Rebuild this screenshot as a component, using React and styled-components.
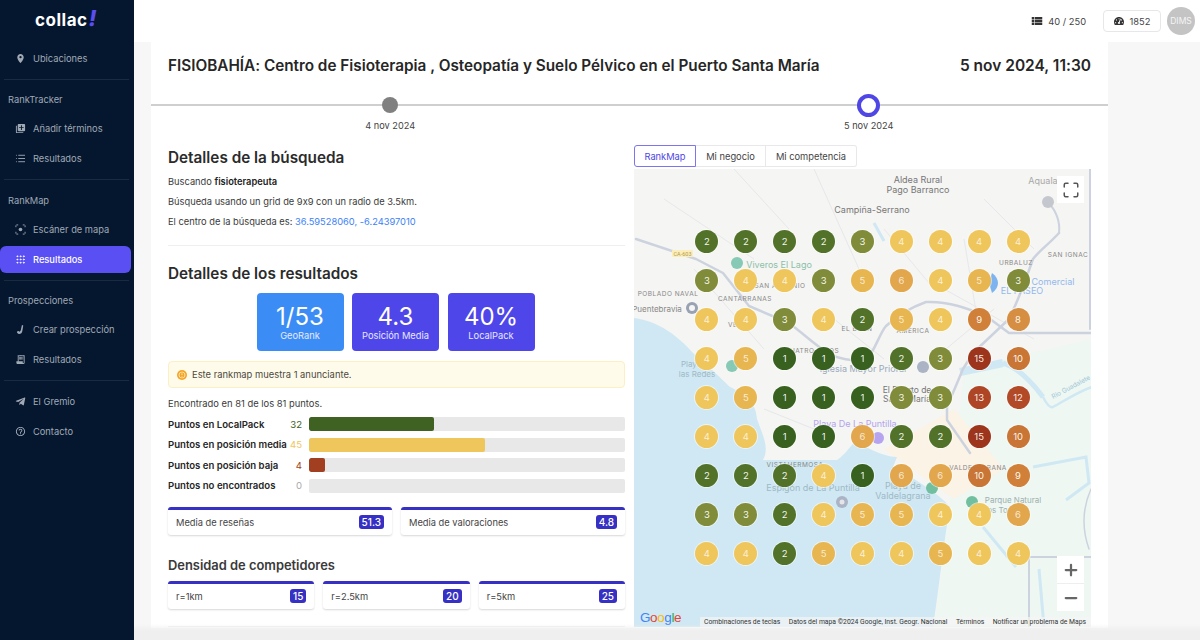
import React from "react";
import styled, { createGlobalStyle } from "styled-components";
import {
  MdLocationOn,
  MdLibraryAdd,
  MdReceiptLong,
  MdViewList,
  MdHelpOutline,
  MdErrorOutline,
} from "react-icons/md";
import { FaTelegramPlane, FaTachometerAlt } from "react-icons/fa";
import { List, Grip, Maximize, Plus, Minus } from "lucide-react";

const GlobalStyle = createGlobalStyle`
  html, body {
    margin: 0;
    height: 640px;
    overflow: hidden;
    background: #f7f7f7;
    font-family: Inter, "Liberation Sans", sans-serif;
    font-feature-settings: "calt" 0;
    color: #2b2b2b;
  }
  * { box-sizing: border-box; }
`;

const Page = styled.div`
  position: relative;
  display: flex;
  width: 1200px;
  height: 640px;
`;

/* sidebar */
const Sidebar = styled.nav`
  width: 134px;
  flex-shrink: 0;
  display: flex;
  flex-direction: column;
  background: #04172f;
  color: #a1a9b5;
  font-size: 9.3px;
`;

const Logo = styled.div`
  height: 43px;
  padding: 7px 0 0 35px;
  font-size: 17px;
  line-height: 26px;
  font-weight: 700;
  letter-spacing: 0.5px;
  color: #fff;
`;

const LogoMark = styled.span`
  display: inline-block;
  margin-left: 1px;
  color: #5b4df0;
  font-size: 22px;
  font-weight: 800;
  line-height: 20px;
  transform: skewX(-10deg);
`;

const NavItem = styled.a`
  display: flex;
  align-items: center;
  gap: 7px;
  height: 27px;
  margin: 1.5px 3px 1.5px 0;
  padding-left: 15px;
  border-radius: 6px;
  background: ${(p) => (p.$active ? "#5a4ff3" : "transparent")};
  color: ${(p) => (p.$active ? "#fff" : "#a1a9b5")};
  font-weight: ${(p) => (p.$active ? 500 : 400)};
  svg { width: 11px; height: 11px; flex-shrink: 0; }
`;

const NavDivider = styled.div`
  height: 1px;
  flex-shrink: 0;
  margin: 6px 5px ${(p) => p.$after || 11}px 4px;
  background: rgba(255, 255, 255, 0.09);
`;

const NavGroup = styled.div`
  height: 16px;
  line-height: 18px;
  margin-bottom: 6px;
  padding-left: 8px;
`;

/* main area */
const Main = styled.div`
  flex: 1;
  display: flex;
  flex-direction: column;
  min-width: 0;
`;

const TopBar = styled.header`
  height: 42px;
  flex-shrink: 0;
  display: flex;
  align-items: center;
  justify-content: flex-end;
  padding-right: 5px;
  background: #fff;
  font-size: 9.3px;
  color: #444;
`;

const Quota = styled.div`
  display: flex;
  align-items: center;
  gap: 4px;
  margin-right: 17px;
  svg { width: 14px; height: 14px; color: #333; }
`;

const Credits = styled.div`
  display: flex;
  align-items: center;
  justify-content: center;
  gap: 6px;
  width: 58px;
  height: 22px;
  border: 1px solid #e6e7ea;
  border-radius: 4px;
  margin-right: 6px;
  svg { width: 10px; height: 10px; color: #333; }
`;

const Avatar = styled.div`
  width: 28px;
  height: 28px;
  border-radius: 50%;
  background: #c4c4c4;
  color: #f4f4f4;
  font-size: 8.5px;
  text-align: center;
  line-height: 28px;
`;

const Content = styled.main`
  flex: 1;
  padding: 0 92px 0 17px;
`;

const Card = styled.section`
  height: 586px;
  background: #fff;
`;

const TitleRow = styled.div`
  display: flex;
  justify-content: space-between;
  align-items: center;
  height: 46px;
  padding: 0 17px;
  font-weight: 600;
  color: #262626;
`;

const Title = styled.span`
  font-size: 15.3px;
`;

const TitleDate = styled.span`
  font-size: 15.5px;
`;

const Timeline = styled.div`
  position: relative;
  display: grid;
  grid-template-columns: 1fr 1fr;
  margin-top: 5px;
  &::before {
    content: "";
    position: absolute;
    left: 0;
    right: 0;
    top: 11px;
    height: 2px;
    background: #cfcfcf;
  }
`;

const TimelineStop = styled.div`
  position: relative;
  display: flex;
  flex-direction: column;
  align-items: center;
  font-size: 9.2px;
  line-height: 18px;
  color: #444;
`;

const MarkerSlot = styled.div`
  height: 24px;
  display: flex;
  align-items: center;
`;

const Marker = styled.div`
  border-radius: 50%;
  width: ${(p) => (p.$current ? 23 : 16)}px;
  height: ${(p) => (p.$current ? 23 : 16)}px;
  background: ${(p) => (p.$current ? "#fff" : "#808080")};
  border: ${(p) => (p.$current ? "4px solid #4f46e5" : "none")};
`;

const Columns = styled.div`
  display: grid;
  grid-template-columns: 457px 457px;
  gap: 9px;
  padding: 0 17px;
  margin-top: 10px;
`;

const Details = styled.div`
  display: flex;
  flex-direction: column;
  padding-top: 3px;
`;

const Heading = styled.h2`
  margin: 0 0 ${(p) => p.$gap || 0}px;
  font-size: 15.3px;
  line-height: 20px;
  font-weight: 600;
  color: #2b2b2b;
`;

const Line = styled.p`
  margin: 0 0 ${(p) => p.$gap ?? 6}px;
  font-size: 9.3px;
  line-height: 14px;
  color: #3a3a3a;
  strong { font-weight: 600; color: #222; }
`;

const Coord = styled.a`
  color: #3b82f6;
`;

const Rule = styled.hr`
  width: 100%;
  margin: 16px 0 18px;
  border: 0;
  border-top: 1px solid #efefef;
`;

const StatRow = styled.div`
  display: flex;
  justify-content: center;
  gap: 8.5px;
  margin: 9px 1px 10px -1px;
`;

const Stat = styled.div`
  width: 87px;
  height: 58px;
  border-radius: 4px;
  background: ${(p) => (p.$light ? "#3b8df5" : "#4f46ea")};
  color: #fff;
  text-align: center;
  padding-top: 11px;
`;

const StatValue = styled.div`
  font-size: 24px;
  line-height: 26px;
`;

const StatLabel = styled.div`
  font-size: 9.3px;
  line-height: 12px;
  color: #e6e8ff;
`;

const Alert = styled.div`
  display: flex;
  align-items: center;
  gap: 5px;
  height: 27px;
  padding-left: 8px;
  border: 1px solid #fcefc4;
  border-radius: 4px;
  background: #fffbeb;
  font-size: 9.4px;
  color: #4c4a40;
`;

const AlertDot = styled.span`
  display: flex;
  align-items: center;
  justify-content: center;
  width: 10px;
  height: 10px;
  border-radius: 50%;
  background: #f5a524;
  svg { width: 8px; height: 8px; color: #fff; }
`;

const Found = styled.p`
  margin: 9px 0 6px;
  font-size: 9.4px;
  line-height: 14px;
  color: #3a3a3a;
`;

const Bars = styled.div`
  display: flex;
  flex-direction: column;
  gap: 6.5px;
`;

const BarRow = styled.div`
  display: grid;
  grid-template-columns: 122px 12px 1fr;
  align-items: center;
  height: 14px;
  font-size: 9.6px;
`;

const BarLabel = styled.span`
  font-weight: 600;
  color: #262626;
  white-space: nowrap;
`;

const BarCount = styled.span`
  display: flex;
  justify-content: flex-end;
  color: ${(p) => p.$color};
`;

const BarTrack = styled.div`
  height: 14px;
  margin-left: 7px;
  border-radius: 2px;
  background: #e8e8e8;
  overflow: hidden;
`;

const BarFill = styled.div`
  height: 100%;
  border-radius: 2px;
  background: ${(p) => p.$color};
`;

const TileGrid = styled.div`
  display: grid;
  grid-template-columns: repeat(${(p) => p.$cols}, 1fr);
  gap: 9px;
  margin-top: ${(p) => p.$top || 0}px;
`;

const Tile = styled.div`
  display: flex;
  align-items: center;
  justify-content: space-between;
  height: 28px;
  padding: 0 8px;
  border-radius: 3px;
  border-top: 3px solid #3730c4;
  box-shadow: 0 1px 2px rgba(0, 0, 0, 0.16);
  font-size: 9.3px;
  color: #444;
`;

const Badge = styled.span`
  padding: 1.5px 3px;
  border-radius: 3px;
  background: #3730c4;
  color: #fff;
  font-size: 10px;
  line-height: 11px;
  font-weight: 500;
`;

const SubHeading = styled.h3`
  margin: 22px 0 6px;
  font-size: 12.9px;
  line-height: 18px;
  font-weight: 600;
  color: #3a3a3a;
`;

const BottomRule = styled.hr`
  width: 100%;
  margin: 17px 0 0;
  border: 0;
  border-top: 1px solid #efefef;
`;

const BottomFade = styled.div`
  position: absolute;
  left: 134px;
  right: 0;
  bottom: 0;
  height: 16px;
  background: linear-gradient(to bottom, rgba(239, 239, 239, 0), #efefef 45%);
`;

/* map side */
const MapSide = styled.div`
  display: flex;
  flex-direction: column;
`;

const Tabs = styled.div`
  display: flex;
  height: 22px;
  font-size: 9.3px;
`;

const Tab = styled.div`
  display: flex;
  align-items: center;
  justify-content: center;
  width: ${(p) => p.$width}px;
  border: 1px solid ${(p) => (p.$active ? "#7c75ee" : "#e8e8ea")};
  border-left-width: ${(p) => (p.$active ? 1 : 0)}px;
  border-radius: ${(p) => p.$radius};
  color: ${(p) => (p.$active ? "#4f46e5" : "#444")};
`;

const MapBox = styled.div`
  position: relative;
  width: 457px;
  height: 458px;
  margin-top: 2px;
  overflow: hidden;
  background: #f5f5f3;
`;

const MapArt = styled.svg`
  display: block;
  width: 457px;
  height: 458px;
`;

const PinGrid = styled.div`
  position: absolute;
  left: 53.5px;
  top: 53.5px;
  display: grid;
  grid-template-columns: repeat(9, 38.9px);
  grid-auto-rows: 38.9px;
  place-items: center;
`;

const Pin = styled.div`
  width: 23px;
  height: 23px;
  border-radius: 50%;
  background: ${(p) => p.$color};
  box-shadow: 0 0 0 1px rgba(255, 255, 255, 0.55);
  color: rgba(255, 255, 255, ${(p) => (p.$soft ? 0.75 : 0.95)});
  font-size: 9.5px;
  line-height: 23px;
  text-align: center;
`;

const MapButton = styled.div`
  position: absolute;
  right: 7px;
  top: 7px;
  width: 27px;
  height: 27px;
  display: flex;
  align-items: center;
  justify-content: center;
  background: #fff;
  color: #555;
`;

const ZoomControl = styled.div`
  position: absolute;
  right: 7px;
  bottom: 16px;
  width: 27px;
  height: 55px;
  display: flex;
  flex-direction: column;
  background: #fff;
  color: #666;
`;

const ZoomStep = styled.div`
  flex: 1;
  display: flex;
  align-items: center;
  justify-content: center;
  & + & { border-top: 1px solid #eee; }
`;

const GoogleMark = styled.div`
  position: absolute;
  left: 6px;
  bottom: 2px;
  font-family: "Liberation Sans", sans-serif;
  font-size: 13.5px;
  line-height: 14px;
  letter-spacing: -0.4px;
`;

const GoogleLetter = styled.span`
  color: ${(p) => p.$color};
`;

const MapFooter = styled.div`
  position: absolute;
  right: 0;
  bottom: 0;
  height: 10px;
  padding: 0 5px 0 4px;
  display: flex;
  gap: 8.5px;
  background: rgba(245, 245, 245, 0.7);
  font-family: Roboto, "Liberation Sans", sans-serif;
  font-size: 6.8px;
  line-height: 10px;
  color: #333;
  white-space: nowrap;
`;

const pinColors = {
  1: "#38601f",
  2: "#52722a",
  3: "#808c3a",
  4: "#efc65c",
  5: "#e8b650",
  6: "#e2a64c",
  8: "#d68f42",
  9: "#d08038",
  10: "#c97535",
  12: "#b24a28",
  13: "#ae4626",
  15: "#9c351c",
};

const grid = [
  2, 2, 2, 2, 3, 4, 4, 4, 4,
  3, 4, 4, 3, 5, 6, 4, 5, 3,
  4, 4, 3, 4, 2, 5, 4, 9, 8,
  4, 5, 1, 1, 1, 2, 3, 15, 10,
  4, 5, 1, 1, 1, 3, 3, 13, 12,
  4, 4, 1, 1, 6, 2, 2, 15, 10,
  2, 2, 2, 4, 1, 6, 6, 10, 9,
  3, 3, 2, 4, 5, 5, 4, 4, 6,
  4, 4, 2, 5, 4, 4, 5, 4, 4,
];

const bars = [
  { label: "Puntos en LocalPack", count: 32, color: "#3f6223" },
  { label: "Puntos en posición media", count: 45, color: "#efc65c" },
  { label: "Puntos en posición baja", count: 4, color: "#a23f20" },
  { label: "Puntos no encontrados", count: 0, color: "#aaaaaa" },
];

const CreateIcon = () => (
  <svg viewBox="0 0 12 12" fill="currentColor">
    <path d="M7.6 1 L9 1.6 L8 7.5 C7.8 10 6 11 4.2 10.8 C2.6 10.6 2 9.4 2.2 8.2 L3.8 7.6 L5 8.4 L6.2 7.2 Z" />
  </svg>
);

const ScanIcon = () => (
  <svg viewBox="0 0 12 12" fill="none" stroke="currentColor" strokeWidth="1">
    <path d="M1 3.5 V1 H3.5 M8.5 1 H11 V3.5 M11 8.5 V11 H8.5 M3.5 11 H1 V8.5" strokeDasharray="2 1" />
    <circle cx="6" cy="6" r="2" fill="currentColor" stroke="none" />
  </svg>
);

const roadStyle = { fill: "none", stroke: "#cdd3de", strokeLinecap: "round", strokeLinejoin: "round" };
const thinRoad = { fill: "none", stroke: "#e6e7ea" };
const water = "#cfe8f3";

const labels = [
  [284, 14, "Aldea Rural", "#777", 9],
  [284, 24, "Pago Barranco", "#777", 9],
  [238, 44, "Campiña-Serrano", "#777", 9],
  [409, 15, "Aquala", "#a8a8a8", 9],
  [145, 99, "Viveros El Lago", "#8cc0a8", 9],
  [382, 96, "URBALUZ", "#888", 6.5],
  [434, 88, "SAN IGNAC", "#888", 6.5],
  [34, 127, "POBLADO NAVAL", "#888", 6.5],
  [111, 132, "CANTARRANAS", "#888", 6.5],
  [146, 119, "SAN ANTONIO", "#888", 6.5],
  [419, 116, "Comercial", "#93b8ee", 9],
  [388, 125, "EL PASEO", "#93b8ee", 9],
  [23, 143, "Puentebravia", "#888", 8],
  [106, 158, "VENTA", "#888", 6.5],
  [223, 162, "EL BUEN", "#888", 6.5],
  [279, 164, "AMÉRICA", "#888", 6.5],
  [386, 155, "MA", "#888", 6.5],
  [178, 184, "CUATRO PINOS", "#888", 6.5],
  [63, 198, "Playa de", "#9fb9c6", 8],
  [63, 208, "las Redes", "#9fb9c6", 8],
  [229, 203, "Iglesia Mayor Prioral", "#9ab", 9],
  [273, 224, "El Puerto de", "#777", 8.5],
  [273, 233, "Santa María", "#777", 8.5],
  [221, 258, "Playa De La Puntilla", "#b3a4ee", 9],
  [161, 298, "VISTAHERMOSA", "#888", 6.5],
  [344, 301, "VALDELAGRANA", "#888", 6.5],
  [179, 322, "Espigón de La Puntilla", "#9fb9c6", 9],
  [269, 320, "Playa de", "#9fb9c6", 9],
  [269, 330, "Valdelagrana", "#9fb9c6", 9],
  [379, 334, "Parque Natural", "#9db0b0", 8],
  [372, 344, "Los Toruños", "#9db0b0", 8],
];

const MapDrawing = () => (
  <MapArt viewBox="0 0 457 458">
    <rect width="457" height="458" fill="#f5f5f3" />
    {/* tierra de la derecha */}
    <path d="M300 458 L320 300 L330 200 L457 170 L457 458 Z" fill="#eef7f2" />
    <path d="M250 280 L320 240 L370 300 L320 330 Z" fill="#fbf3e6" />
    {/* bahia */}
    <path
      d="M0 149 C25 152 45 168 59 184 C75 198 90 212 96 218 C110 225 122 232 123 250 C128 265 136 278 129 291 L203 291 C212 285 215 278 222 272 C240 284 255 288 263 288 L259 298 C285 312 305 325 316 338 C310 370 305 420 299 458 L0 458 Z"
      fill={water}
    />
    {/* estuario */}
    <path d="M326 203 C340 200 355 197 369 194" fill="none" stroke={water} strokeWidth="8" />
    <path d="M369 194 C382 198 397 212 409 228" fill="none" stroke={water} strokeWidth="5" />
    <path d="M409 228 C413 236 416 239 419 238 C430 232 445 222 458 218" fill="none" stroke={water} strokeWidth="2.5" />
    <path d="M399 298 L452 288 L455 314 L432 331 M349 358 L382 398 M410 458 L405 400" fill="none" stroke={water} strokeWidth="3" />
    {/* calles */}
    <path d="M30 30 L120 90 M180 0 L225 100 M100 0 L155 60 M250 60 L300 120 M330 70 L345 160 M60 100 L130 180 M200 150 L250 190 M310 120 L400 170 M350 30 L400 80 M300 190 L360 140 M130 240 L180 260" {...thinRoad} />
    <path d="M2 70 L62 90 L89 104 L115 137 L155 154 C170 165 185 180 199 187 C215 192 225 192 232 190 C240 185 245 165 252 157 C265 145 278 138 292 133 C315 132 335 140 352 147 L375 164 L460 164" {...roadStyle} strokeWidth="2.5" />
    <path d="M425 64 C415 75 405 82 399 90 C392 110 385 130 375 150 L339 184 L329 200 L313 238 L313 251 L336 284" {...roadStyle} strokeWidth="2.5" />
    <path d="M414 33 C425 45 426 55 425 64" {...roadStyle} strokeWidth="2" />
    <path d="M456 0 L456 160" {...roadStyle} strokeWidth="2" />
    <path d="M395 458 L395 388 L457 388" {...roadStyle} strokeWidth="2" />
    <path d="M457 320 C448 340 448 360 455 380" {...roadStyle} strokeWidth="1.5" />
    {/* lago */}
    <path d="M240 54 L250 72" fill="none" stroke={water} strokeWidth="3" />
    {/* marcas */}
    <rect x="38" y="81" width="21" height="7" rx="1" fill="#fbeebb" />
    <text x="48.5" y="87" fontSize="5.5" textAnchor="middle" fill="#b59a4a" fontFamily="Roboto">CA-603</text>
    <circle cx="103" cy="94" r="6" fill="#86c9b4" />
    <circle cx="98" cy="197" r="6" fill="#86c9b4" />
    <circle cx="58" cy="139" r="6" fill="#98a2b3" />
    <circle cx="58" cy="139" r="3" fill="#f5f5f3" />
    <circle cx="414" cy="33" r="6" fill="#c4c8ce" />
    <circle cx="289" cy="198" r="6" fill="#aab4c4" />
    <circle cx="208" cy="333" r="6" fill="#aab4c4" />
    <circle cx="208" cy="333" r="2.5" fill="#e5e5e8" />
    <circle cx="338" cy="333" r="6" fill="#72bfa0" />
    <circle cx="244" cy="269" r="6" fill="#b6a4f0" />
    <circle cx="298" cy="319" r="6" fill="#72bfa0" />
    <path d="M358 104 C366 110 366 118 358 124 L355 114 Z" fill="#7db4f0" />
    {labels.map(([x, y, text, color, size]) => (
      <text
        key={text}
        x={x}
        y={y}
        fontSize={size}
        fill={color}
        textAnchor="middle"
        fontFamily="Inter, sans-serif"
        letterSpacing={size === 6.5 ? 0.5 : 0}
      >
        {text}
      </text>
    ))}
    <text x="419" y="230" fontSize="6.5" fill="#9ec7d8" fontFamily="Inter, sans-serif" transform="rotate(-28 419 230)">Río Guadalete</text>
  </MapArt>
);

const App = () => (
  <Page>
    <GlobalStyle />
    <Sidebar>
      <Logo>
        collac<LogoMark>!</LogoMark>
      </Logo>
      <NavItem><MdLocationOn />Ubicaciones</NavItem>
      <NavDivider />
      <NavGroup>RankTracker</NavGroup>
      <NavItem><MdLibraryAdd />Añadir términos</NavItem>
      <NavItem><List />Resultados</NavItem>
      <NavDivider $after={12} />
      <NavGroup>RankMap</NavGroup>
      <NavItem><ScanIcon />Escáner de mapa</NavItem>
      <NavItem $active><Grip />Resultados</NavItem>
      <NavDivider />
      <NavGroup>Prospecciones</NavGroup>
      <NavItem><CreateIcon />Crear prospección</NavItem>
      <NavItem><MdReceiptLong />Resultados</NavItem>
      <NavDivider $after={5} />
      <NavItem><FaTelegramPlane />El Gremio</NavItem>
      <NavItem><MdHelpOutline />Contacto</NavItem>
    </Sidebar>
    <Main>
      <TopBar>
        <Quota><MdViewList />40 / 250</Quota>
        <Credits><FaTachometerAlt />1852</Credits>
        <Avatar>DIMS</Avatar>
      </TopBar>
      <Content>
        <Card>
          <TitleRow>
            <Title>FISIOBAHÍA: Centro de Fisioterapia , Osteopatía y Suelo Pélvico en el Puerto Santa María</Title>
            <TitleDate>5 nov 2024, 11:30</TitleDate>
          </TitleRow>
          <Timeline>
            <TimelineStop>
              <MarkerSlot><Marker /></MarkerSlot>
              4 nov 2024
            </TimelineStop>
            <TimelineStop>
              <MarkerSlot><Marker $current /></MarkerSlot>
              5 nov 2024
            </TimelineStop>
          </Timeline>
          <Columns>
            <Details>
              <Heading $gap={7}>Detalles de la búsqueda</Heading>
              <Line>Buscando <strong>fisioterapeuta</strong></Line>
              <Line>Búsqueda usando un grid de 9x9 con un radio de 3.5km.</Line>
              <Line $gap={0}>
                El centro de la búsqueda es: <Coord>36.59528060, -6.24397010</Coord>
              </Line>
              <Rule />
              <Heading>Detalles de los resultados</Heading>
              <StatRow>
                <Stat $light><StatValue>1/53</StatValue><StatLabel>GeoRank</StatLabel></Stat>
                <Stat><StatValue>4.3</StatValue><StatLabel>Posición Media</StatLabel></Stat>
                <Stat><StatValue>40%</StatValue><StatLabel>LocalPack</StatLabel></Stat>
              </StatRow>
              <Alert>
                <AlertDot><MdErrorOutline /></AlertDot>
                Este rankmap muestra 1 anunciante.
              </Alert>
              <Found>Encontrado en 81 de los 81 puntos.</Found>
              <Bars>
                {bars.map((bar) => (
                  <BarRow key={bar.label}>
                    <BarLabel>{bar.label}</BarLabel>
                    <BarCount $color={bar.color}>{bar.count}</BarCount>
                    <BarTrack>
                      <BarFill $color={bar.color} style={{ width: `${(bar.count / 81) * 100}%` }} />
                    </BarTrack>
                  </BarRow>
                ))}
              </Bars>
              <TileGrid $cols={2} $top={14}>
                <Tile>Media de reseñas<Badge>51.3</Badge></Tile>
                <Tile>Media de valoraciones<Badge>4.8</Badge></Tile>
              </TileGrid>
              <SubHeading>Densidad de competidores</SubHeading>
              <TileGrid $cols={3}>
                <Tile>r=1km<Badge>15</Badge></Tile>
                <Tile>r=2.5km<Badge>20</Badge></Tile>
                <Tile>r=5km<Badge>25</Badge></Tile>
              </TileGrid>
              <BottomRule />
            </Details>
            <MapSide>
              <Tabs>
                <Tab $active $width={62} $radius="3px 0 0 3px">RankMap</Tab>
                <Tab $width={70} $radius="0">Mi negocio</Tab>
                <Tab $width={91} $radius="0 3px 3px 0">Mi competencia</Tab>
              </Tabs>
              <MapBox>
                <MapDrawing />
                <PinGrid>
                  {grid.map((value, i) => (
                    <Pin key={i} $color={pinColors[value]} $soft={value >= 4 && value <= 6}>
                      {value}
                    </Pin>
                  ))}
                </PinGrid>
                <MapButton><Maximize size={18} strokeWidth={2} /></MapButton>
                <ZoomControl>
                  <ZoomStep><Plus size={18} strokeWidth={3} /></ZoomStep>
                  <ZoomStep><Minus size={18} strokeWidth={3} /></ZoomStep>
                </ZoomControl>
                <GoogleMark>
                  <GoogleLetter $color="#4285f4">G</GoogleLetter>
                  <GoogleLetter $color="#ea4335">o</GoogleLetter>
                  <GoogleLetter $color="#fbbc05">o</GoogleLetter>
                  <GoogleLetter $color="#4285f4">g</GoogleLetter>
                  <GoogleLetter $color="#34a853">l</GoogleLetter>
                  <GoogleLetter $color="#ea4335">e</GoogleLetter>
                </GoogleMark>
                <MapFooter>
                  <span>Combinaciones de teclas</span>
                  <span>Datos del mapa ©2024 Google, Inst. Geogr. Nacional</span>
                  <span>Términos</span>
                  <span>Notificar un problema de Maps</span>
                </MapFooter>
              </MapBox>
            </MapSide>
          </Columns>
        </Card>
      </Content>
    </Main>
    <BottomFade />
  </Page>
);

export default App;
